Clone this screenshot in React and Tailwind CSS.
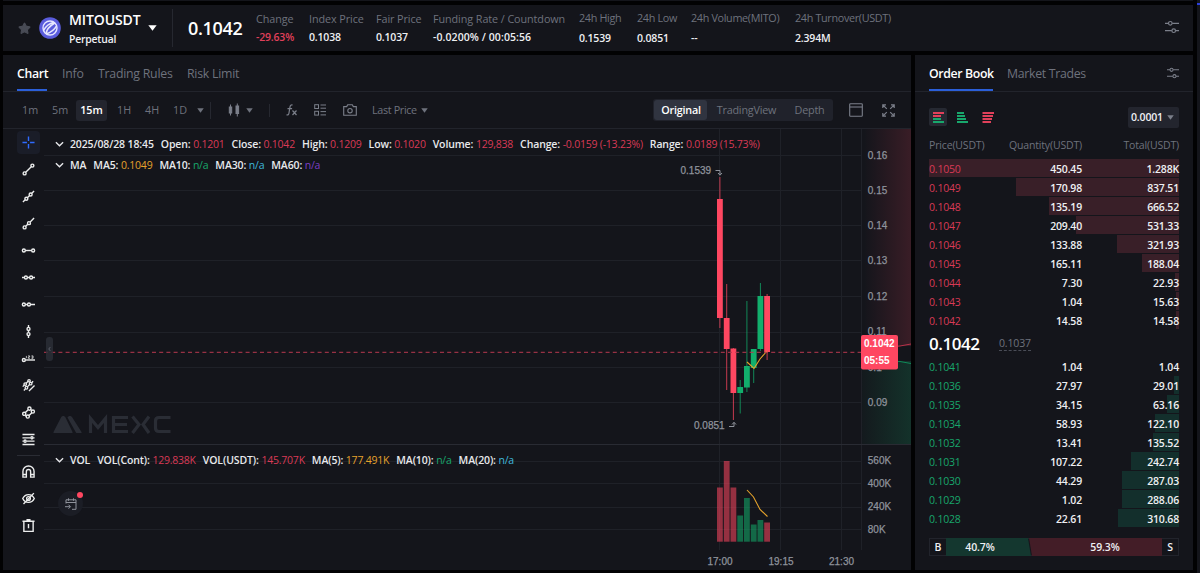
import { Star } from 'lucide-react';

const stats = [
  { label: 'Change', value: '-29.63%', width: 'w-[53px]', red: true },
  { label: 'Index Price', value: '0.1038', width: 'w-[67px]' },
  { label: 'Fair Price', value: '0.1037', width: 'w-[57px]' },
  { label: 'Funding Rate / Countdown', value: '-0.0200% / 00:05:56', width: 'w-[146px]', wide: true },
  { label: '24h High', value: '0.1539', width: 'w-[58px]', spread: true },
  { label: '24h Low', value: '0.0851', width: 'w-[54px]', spread: true },
  { label: '24h Volume(MITO)', value: '--', width: 'w-[104px]', spread: true },
  { label: '24h Turnover(USDT)', value: '2.394M', width: 'w-[110px]', spread: true },
];

const asks = [
  ['0.1050', '450.45', '1.288K', 250],
  ['0.1049', '170.98', '837.51', 163],
  ['0.1048', '135.19', '666.52', 130],
  ['0.1047', '209.40', '531.33', 103],
  ['0.1046', '133.88', '321.93', 62],
  ['0.1045', '165.11', '188.04', 37],
  ['0.1044', '7.30', '22.93', 4],
  ['0.1043', '1.04', '15.63', 3],
  ['0.1042', '14.58', '14.58', 3],
];

const bids = [
  ['0.1041', '1.04', '1.04', 0],
  ['0.1036', '27.97', '29.01', 5],
  ['0.1035', '34.15', '63.16', 12],
  ['0.1034', '58.93', '122.10', 24],
  ['0.1032', '13.41', '135.52', 26],
  ['0.1031', '107.22', '242.74', 48],
  ['0.1030', '44.29', '287.03', 57],
  ['0.1029', '1.02', '288.06', 57],
  ['0.1028', '22.61', '310.68', 61],
];

const RED = '#ff4761';
const GREEN = '#12ae6c';

// x, open/close box, wick, volume top
const candles = [
  { x: 717, top: 199, bottom: 318, high: 177, low: 328, vol: 487.5, color: RED },
  { x: 723.8, top: 318, bottom: 349, high: 284, low: 390, vol: 461, color: RED },
  { x: 730.5, top: 348.5, bottom: 393, high: 348, low: 420, vol: 487.5, color: RED },
  { x: 737.3, top: 387, bottom: 393, high: 380, low: 413.5, vol: 515.5, color: GREEN },
  { x: 744, top: 366, bottom: 387.5, high: 301, low: 392, vol: 498, color: GREEN },
  { x: 750.8, top: 349, bottom: 368, high: 349, low: 383, vol: 524.5, color: GREEN },
  { x: 757.5, top: 296, bottom: 349, high: 283, low: 351, vol: 520, color: GREEN },
  { x: 764.2, top: 296, bottom: 352, high: 294, low: 360, vol: 522.5, color: RED },
];

const priceTicks = [
  ['0.16', 155.5],
  ['0.15', 190.5],
  ['0.14', 225.5],
  ['0.13', 260.5],
  ['0.12', 296.5],
  ['0.11', 332],
  ['0.1', 367.5],
  ['0.09', 402.5],
];

const volumeTicks = [
  ['560K', 461],
  ['400K', 483.5],
  ['240K', 507],
  ['80K', 529.5],
];

const Caret = ({ className = '' }) => (
  <svg viewBox="0 0 8 5" className={`h-[5px] w-[7px] shrink-0 ${className}`}>
    <path d="M0.3 0h7.4L4 5z" fill="currentColor" />
  </svg>
);

const Chevron = () => (
  <svg viewBox="0 0 10 6" className="mr-[6px] mb-[2px] h-[6px] w-[9px] shrink-0">
    <path d="M1 1l4 4 4-4" fill="none" stroke="#e8e9ec" strokeWidth="1.5" />
  </svg>
);

const Sliders = ({ className }) => (
  <svg viewBox="0 0 14 14" className={className} fill="none" stroke="#7b7f8a" strokeWidth="1.2">
    <path d="M0 3.3h3.5M7.2 3.3H14M0 10.7h6.8M10.5 10.7H14" />
    <circle cx="5.3" cy="3.3" r="1.8" />
    <circle cx="8.7" cy="10.7" r="1.8" />
  </svg>
);

const toolIcons = [
  <g stroke="#2f6bff"><path d="M7 0.5v4.8M7 8.7v4.800M0.500 7h4.800M8.700 7h4.800" /></g>,
  <g><path d="M4 10l6-6" /><circle cx="2.8" cy="11.2" r="1.6" /><circle cx="11.2" cy="2.8" r="1.6" /></g>,
  <g><path d="M1 13l2.4-2.4M6 8.200l2-2M10.600 3.600L13 1.200" /><circle cx="4.700" cy="9.400" r="1.600" /><circle cx="9.300" cy="4.800" r="1.600" /></g>,
  <g><path d="M4 10l2.200-2.200M8.800 5.400L13 1.200" /><circle cx="2.800" cy="11.200" r="1.600" /><circle cx="7.500" cy="6.600" r="1.600" /></g>,
  <g><path d="M3.700 7h6.600" /><circle cx="2" cy="7" r="1.600" /><circle cx="12" cy="7" r="1.600" /></g>,
  <g><path d="M0 7h2.500M5.800 7h2.400M11.500 7H14" /><circle cx="4.200" cy="7" r="1.600" /><circle cx="9.800" cy="7" r="1.600" /></g>,
  <g><path d="M3.600 7h2.200M9.200 7H14" /><circle cx="2" cy="7" r="1.600" /><circle cx="7.500" cy="7" r="1.600" /></g>,
  <g><path d="M7 0v2.500M7 5.800v2.400M7 11.500V14" /><circle cx="7" cy="4.200" r="1.600" /><circle cx="7" cy="9.800" r="1.600" /></g>,
  <g><path d="M3.800 8.600H14" /><circle cx="2" cy="8.600" r="1.600" /><path d="M4.700 4.200v2.500M6.500 4.200h1.700v1.200H6.800v1.400h1.700M10.200 4.200h1.700v2.600h-1.700M10.400 5.500h1.400" strokeWidth="0.800" /></g>,
  <g strokeWidth="1.400"><path d="M0.800 8.200l1.700-1.700M4.500 4.500l2.200-2.200M2 12.400l1.600-1.600M6 8.200l2-2M10.400 4l1.600-1.600M7.500 13l6-6" /><circle cx="3.500" cy="5.500" r="1.400" /><circle cx="7.600" cy="1.900" r="1.300" /><circle cx="4.800" cy="9.400" r="1.400" /><circle cx="9.300" cy="5" r="1.400" /></g>,
  <g strokeWidth="1.500"><path d="M3.400 7.200L6.600 4M7.600 10.200L10.600 7.200M9.600 4l1.200 1.200M3.400 9.800l1.400 1.400" /><circle cx="2.400" cy="8.400" r="1.700" /><circle cx="8" cy="2.800" r="1.700" /><circle cx="6.200" cy="11.400" r="1.700" /><circle cx="11.700" cy="6" r="1.700" /></g>,
  <g><path d="M0.500 1.600h13M0.500 5.200h8.500M12.300 5.200h1.200M0.500 8.800h1.200M5 8.800h8.500M0.500 12.400h13" /><circle cx="10.700" cy="5.200" r="1.200" /><circle cx="3.300" cy="8.800" r="1.200" /></g>,
];

const bottomTools = [
  <g><path d="M1 13V7a6 6 0 0112 0v6H9.300V7.200a2.300 2.300 0 00-4.600 0V13zM1 10.200h3.700M9.300 10.200H13" /></g>,
  <g><path d="M0.800 7C3.500 1.400 10.500 1.400 13.200 7 10.500 12.600 3.500 12.600 0.800 7z" /><circle cx="7" cy="7" r="2" /><path d="M1.600 13L12.800 1.200" /></g>,
  <g><path d="M0.500 2.400h13M2 2.400v10.900h10V2.400M4.800 0.800h4.400M7 5.400v4.600" /></g>,
];

const ToolIcon = ({ children, active }) => (
  <div
    className={`flex h-[23px] w-[23px] shrink-0 items-center justify-center rounded-sm ${active ? 'bg-[#1a1d28]' : ''}`}
  >
    <svg viewBox="0 0 14 14" className="h-[13px] w-[13px] overflow-visible" fill="none" stroke="#eceded" strokeWidth="1.500">
      {children}
    </svg>
  </div>
);

const Header = () => (
  <header className="flex h-[46px] items-center bg-[#14151b] pl-[15px]">
    <Star className="h-[13px] w-[13px] fill-[#484b55] text-[#484b55]" />
    <svg viewBox="0 0 22 22" className="ml-[8px] h-[22px] w-[22px]">
      <circle cx="11" cy="11" r="10.8" fill="#5a5cdc" />
      <circle cx="11" cy="11" r="7" fill="none" stroke="#e6e7ff" strokeWidth="1.4" />
      <path d="M4.600 13.400C6.500 9.500 10 6.500 15 5.200M7 17C7.500 12 11.500 8.500 15.800 6M7 17C11.500 15.500 15.500 12.500 17.600 8.800" fill="none" stroke="#e6e7ff" strokeWidth="1.500" />
    </svg>
    <div className="ml-[8px] w-[79px] pt-[3px] whitespace-nowrap">
      <div className="text-[14px] leading-[18px] font-semibold tracking-[-0.1px] text-white">MITOUSDT</div>
      <div className="mt-[2px] text-[10.4px] leading-[17px] font-semibold tracking-[-0.2px] text-[#eeeff2]">Perpetual</div>
    </div>
    <Caret className="h-[6px] w-[9px] text-white" />
    <div className="ml-[15px] h-[38px] w-px bg-[#262830]" />
    <div className="ml-[15px] w-[68px] pt-px text-[18px] font-semibold tracking-[-0.3px] text-white">0.1042</div>
    {stats.map((s) => (
      <div key={s.label} className={`${s.width} shrink-0 whitespace-nowrap text-[10.8px]`}>
        <div className={`leading-[15px] text-[#6e727d] ${s.spread ? '-mt-px tracking-[-0.33px]' : 'tracking-[-0.08px]'}`}>
          {s.label}
        </div>
        <div
          className={`text-[10.5px] leading-[15px] font-[550] ${s.wide ? 'tracking-[0.08px]' : 'tracking-[-0.18px]'} ${s.spread ? 'mt-[6px]' : 'mt-[4px]'} ${s.red ? 'text-[#e0405a]' : 'text-[#eeeff2]'}`}
        >
          {s.value}
        </div>
      </div>
    ))}
    <Sliders className="mr-[14px] mb-[2px] ml-auto h-[14px] w-[14px]" />
  </header>
);

const Toolbar = () => (
  <div className="flex h-[37px] items-center border-b border-[#22242c] pl-[13px] text-[10.8px] whitespace-nowrap text-[#6e727d]">
    <span className="w-[30px] pl-[6px]">1m</span>
    <span className="w-[30px] pl-[6px]">5m</span>
    <span className="flex h-[21px] w-[31px] items-center justify-center rounded-[3px] bg-[#23252e] font-semibold text-white">15m</span>
    <span className="w-[28px] pl-[10px]">1H</span>
    <span className="w-[28px] pl-[10px]">4H</span>
    <span className="w-[34px] pl-[10px]">1D</span>
    <Caret />
    <div className="ml-[6px] h-[17px] w-px bg-[#262830]" />
    <svg viewBox="0 0 12 14" className="ml-[17px] h-[14px] w-[12px]" fill="#7b7f8a" stroke="#7b7f8a">
      <path d="M2.500 1.500v11M9.300 0.500v13" />
      <rect x="1.300" y="4" width="2.400" height="6" />
      <rect x="8" y="3" width="2.600" height="7.500" />
    </svg>
    <Caret className="ml-[6px]" />
    <div className="ml-[16px] h-[13px] w-px bg-[#262830]" />
    <svg viewBox="0 0 12 12" className="ml-[16px] h-[12px] w-[12px]" fill="none" stroke="#7b7f8a" strokeWidth="1.2">
      <path d="M0.500 10.800c1.800.6 2.200-.4 2.500-2L4 2.800C4.300 1.200 5 .6 6.600 1M1.500 4.600h4.600M6.500 6.500l4 4.500M10.500 6.500l-4 4.500" />
    </svg>
    <svg viewBox="0 0 12 12" className="ml-[16px] h-[12px] w-[12px]" fill="none" stroke="#7b7f8a" strokeWidth="1">
      <rect x="0.700" y="0.700" width="3.800" height="3.800" />
      <rect x="0.700" y="7.300" width="3.800" height="3.800" />
      <path d="M6.500 1h5.500M6.500 4.200h5.500M6.500 7.600h5.500M6.500 10.900h5.500" />
    </svg>
    <svg viewBox="0 0 14 12" className="ml-[17px] h-[12px] w-[14px]" fill="none" stroke="#7b7f8a" strokeWidth="1.1">
      <path d="M0.700 2.600h3l1-1.800h4.600l1 1.800h3v8.700H0.700z" />
      <circle cx="7" cy="6.700" r="2.200" />
    </svg>
    <span className="ml-[15px] w-[49px] tracking-[-0.35px]">Last Price</span>
    <Caret />
    <div className="ml-auto flex h-[22px] items-center rounded-[3px] bg-[#20222b] tracking-[-0.2px]">
      <span className="ml-px flex h-[20px] w-[53px] items-center justify-center rounded-[3px] bg-[#303440] pl-px font-[550] text-white">Original</span>
      <span className="w-[79px] text-center">TradingView</span>
      <span className="w-[47px] text-center">Depth</span>
    </div>
    <svg viewBox="0 0 14 14" className="ml-[16px] h-[14px] w-[14px]" fill="none" stroke="#7b7f8a" strokeWidth="1.1">
      <rect x="0.700" y="0.700" width="12.600" height="12.600" rx="0.800" />
      <path d="M0.700 4h12.600" />
    </svg>
    <svg viewBox="0 0 13 13" className="mr-[16px] ml-[19px] h-[13px] w-[13px]" fill="none" stroke="#7b7f8a" strokeWidth="1.200">
      <path d="M0.800 4V0.800H4M9 0.800h3.200V4M12.200 9v3.200H9M4 12.200H0.800V9M0.800 0.800l4 4M12.200 0.800l-4 4M12.200 12.200l-4-4M0.800 12.200l4-4" />
    </svg>
  </div>
);

const Pair = ({ name, value, color = 'text-[#d93a56]' }) => (
  <span className="mr-[7px]">
    {name}: <span className={`font-normal tracking-[-0.22px] ${color}`}>{value}</span>
  </span>
);

const legend = 'absolute left-[11px] flex h-[16px] items-center text-[10.5px] font-[550] tracking-[-0.13px] whitespace-nowrap text-[#e8e9ec]';

const PriceChart = () => (
  <svg viewBox="44 129 867 441" className="h-[441px] w-[867px]" fontFamily="Liberation Sans, Arial, sans-serif" fontSize="10">
    <defs>
      <linearGradient id="askDepth">
        <stop offset="0" stopColor="#ff4761" stopOpacity="0" />
        <stop offset="1" stopColor="#ff4761" stopOpacity="0.16" />
      </linearGradient>
      <linearGradient id="bidDepth">
        <stop offset="0" stopColor="#12ae6c" stopOpacity="0.03" />
        <stop offset="1" stopColor="#12ae6c" stopOpacity="0.19" />
      </linearGradient>
    </defs>

    <g stroke="#1f2128">
      {[...priceTicks, ...volumeTicks].map(([label, y]) => (
        <path key={label} d={`M44 ${Math.floor(y) + 0.5}H861`} />
      ))}
      <path d="M719.500 129V550M780.500 129V550M841.500 129V550M861.500 129V550" />
    </g>
    <path d="M44 444.500H911" stroke="#292b33" />

    <rect x="864" y="129" width="47" height="217" fill="url(#askDepth)" />
    <rect x="862" y="361" width="49" height="83" fill="url(#bidDepth)" />
    <path d="M890 346.800L900 346 911 344" fill="none" stroke="#b8324a" />
    <path d="M890 361L900 361.500 911 363.500" fill="none" stroke="#0f8a58" />

    <g fill="#2a2d35">
      <path d="M53.500 432l7.500-14.500c1-2 3.500-2 4.500 0l7 14.500c.4.800 0 1-1 1H54.500c-1 0-1.300-.3-1-1z" />
      <path d="M67.500 417.500c1-2 3.800-2 4.800 0l9.200 14.500c.4.700.1 1-.8 1h-4.500z" />
    </g>
    <g fill="none" stroke="#2a2d35" strokeWidth="3.200">
      <path d="M90.500 433v-14.500l7.500 9 7.500-9V433" />
      <path d="M128 417.500h-14.500v14H128M113.500 424.500H127" />
      <path d="M132.500 416.500l6.500 8-6.500 8.500M149 416.500l-6 8 6 8.500" />
      <path d="M170.500 417.500H159c-2.500 0-3.500 1-3.500 3.500v7c0 2.500 1 3.500 3.500 3.500h11.500" />
    </g>

    {candles.map((c) => (
      <g key={c.x} fill={c.color}>
        <rect x={c.x} y={c.vol} width="5.800" height={541.7 - c.vol} opacity="0.550" />
        <rect x={c.x + 2.4} y={c.high} width="1" height={c.low - c.high} opacity="0.750" />
        <rect x={c.x} y={c.top} width="5.800" height={c.bottom - c.top} />
      </g>
    ))}
    <path d="M747 362l7 6.500 6-9.500 7-8" fill="none" stroke="#e5a32c" strokeWidth="1.100" />
    <path d="M747 490l6.500 7 6.500 12.500 7.500 7" fill="none" stroke="#e5a32c" strokeWidth="1.100" />
    <path d="M44 352.300H861" stroke="#b8394f" strokeDasharray="4 3.200" />

    <g fill="#8f939c" stroke="#8f939c" strokeWidth="0.250">
      {[...priceTicks, ...volumeTicks].map(([label, y]) => (
        <text key={label} x="867.800" y={y + 3.3}>{label}</text>
      ))}
      <text x="680.500" y="174">0.1539</text>
      <text x="694" y="429">0.0851</text>
      <text x="720" y="565.300" textAnchor="middle">17:00</text>
      <text x="781" y="565.300" textAnchor="middle">19:15</text>
      <text x="841.500" y="565.300" textAnchor="middle">21:30</text>
    </g>
    <g fill="none" stroke="#8f939c">
      <path d="M715.500 170.500h4.500v4M718 173l2 2.200 2-2.200" />
      <path d="M729 426.500h5v-4M732 424.500l2-2.200 2 2.200" />
    </g>

    <rect x="861" y="335" width="37" height="34.500" rx="2" fill="#ff4761" />
    <g fill="#fff" fontWeight="700">
      <text x="864" y="347">0.1042</text>
      <text x="864" y="364">05:55</text>
    </g>
  </svg>
);

const ChartPanel = () => (
  <section className="flex h-[515px] w-[908px] flex-col bg-[#14151b]">
    <nav className="flex h-[37px] gap-[15px] border-b border-[#22242c] pl-[14px] text-[12.3px] tracking-[-0.24px] whitespace-nowrap text-[#6e727d]">
      <span className="flex h-[36px] w-[30px] items-center border-b-2 border-[#2b5fd9] pt-[4px] font-[550] tracking-[-0.3px] text-white">Chart</span>
      <span className="flex h-[36px] w-[21px] items-center pt-[2px]">Info</span>
      <span className="flex h-[36px] w-[74px] items-center pt-[2px]">Trading Rules</span>
      <span className="flex h-[36px] items-center pt-[2px]">Risk Limit</span>
    </nav>
    <Toolbar />
    <div className="flex h-[441px]">
      <aside className="flex w-[41px] flex-col items-center gap-[4px] pt-[2px] pr-[4px] pl-[14px]">
        {toolIcons.map((icon, i) => (
          <ToolIcon key={i} active={i === 0}>{icon}</ToolIcon>
        ))}
        <div className="h-px w-[23px] shrink-0 bg-[#2a2c34]" />
        {bottomTools.map((icon, i) => (
          <ToolIcon key={i}>{icon}</ToolIcon>
        ))}
      </aside>
      <div className="relative">
        <PriceChart />
        <div className={`${legend} top-[8px]`}>
          <Chevron />
          <span className="mr-[7px]">2025/08/28 18:45</span>
          <Pair name="Open" value="0.1201" />
          <Pair name="Close" value="0.1042" />
          <Pair name="High" value="0.1209" />
          <Pair name="Low" value="0.1020" />
          <Pair name="Volume" value="129,838" />
          <Pair name="Change" value="-0.0159 (-13.23%)" />
          <Pair name="Range" value="0.0189 (15.73%)" />
        </div>
        <div className={`${legend} top-[29px]`}>
          <Chevron />
          <span className="mr-[7px]">MA</span>
          <Pair name="MA5" value="0.1049" color="text-[#e5a32c]" />
          <Pair name="MA10" value="n/a" color="text-[#18a76c]" />
          <Pair name="MA30" value="n/a" color="text-[#3fb8dc]" />
          <Pair name="MA60" value="n/a" color="text-[#7a3fc4]" />
        </div>
        <div className={`${legend} top-[324px]`}>
          <Chevron />
          <span className="mr-[7px]">VOL</span>
          <Pair name="VOL(Cont)" value="129.838K" />
          <Pair name="VOL(USDT)" value="145.707K" />
          <Pair name="MA(5)" value="177.491K" color="text-[#e5a32c]" />
          <Pair name="MA(10)" value="n/a" color="text-[#18a76c]" />
          <Pair name="MA(20)" value="n/a" color="text-[#3fb8dc]" />
        </div>
        <div className="absolute top-[208px] left-[2px] flex h-[24px] w-[7px] items-center justify-center rounded-[3px] bg-[#2c2f38]/80">
          <svg viewBox="0 0 4 6" className="h-[6px] w-[3px]">
            <path d="M3 0.500L1 3l2 2.500" fill="none" stroke="#6e727d" />
          </svg>
        </div>
        <div className="absolute top-[362px] left-[14px] flex h-[25px] w-[25px] items-center justify-center rounded-full bg-[#1b1d25]">
          <svg viewBox="0 0 12 12" className="h-[12px] w-[12px]" fill="none" stroke="#8f939c">
            <path d="M1 5.500V1.800h10v9.500H7M1 4.500h10M3.500 0.300v2.500M8.500 0.300v2.500M0 8.700h5M3.500 6.700l2 2-2 2" />
          </svg>
          <span className="absolute top-[1px] right-0 h-[6px] w-[6px] rounded-full bg-[#ff4761]" />
        </div>
      </div>
    </div>
  </section>
);

const Row = ({ row, ask }) => (
  <div className="relative flex h-[19px] items-center pt-[2px] text-[10.5px] font-[550] tracking-[-0.18px] text-[#eeeff2]">
    <div
      className={`absolute top-0 right-0 h-[18px] ${ask ? 'bg-[#391f28]' : 'bg-[#132f2c]'}`}
      style={{ width: row[3] }}
    />
    <span className={`relative w-[80px] font-normal ${ask ? 'text-[#d93a56]' : 'text-[#18a76c]'}`}>{row[0]}</span>
    <span className="relative w-[73px] text-right">{row[1]}</span>
    <span className="relative w-[97px] text-right">{row[2]}</span>
  </div>
);

const BookIcon = ({ top, bottom, alignRight }) => (
  <svg viewBox="0 0 12 11" className="h-[11px] w-[12px]">
    <path d={alignRight ? 'M0.500 1H12M0.500 4H11' : top === bottom ? 'M1 1h7M1 4h8' : 'M1 1h11M1 4h8'} stroke={top} strokeWidth="1.800" />
    <path d={alignRight ? 'M0.500 7H10M0.500 10H9' : top === bottom ? 'M1 7h9M1 10h11' : 'M1 7h8M1 10h11'} stroke={bottom} strokeWidth="1.800" />
  </svg>
);

const OrderBook = () => (
  <section className="h-[515px] w-[278px] bg-[#14151b]">
    <nav className="flex h-[37px] items-center gap-[14px] border-b border-[#22242c] pr-[14px] pl-[14px] text-[12.3px] tracking-[-0.3px] whitespace-nowrap text-[#6e727d]">
      <span className="flex h-[36px] w-[64px] items-center border-b-2 border-[#2b5fd9] pt-[4px] font-[550] tracking-[-0.36px] text-white">Order Book</span>
      <span className="pt-[2px]">Market Trades</span>
      <Sliders className="ml-auto h-[12px] w-[12px]" />
    </nav>
    <div className="px-[14px]">
      <div className="flex h-[50px] items-center">
        <span className="mr-[9px] flex h-[18px] w-[18px] items-center justify-center rounded-[2px] bg-[#262932]">
          <BookIcon top="#e0405a" bottom="#18a76c" />
        </span>
        <BookIcon top="#18a76c" bottom="#18a76c" />
        <span className="ml-[14px] flex"><BookIcon top="#e0405a" bottom="#e0405a" alignRight /></span>
        <span className="ml-auto flex h-[21px] w-[51px] items-center justify-between rounded-[2px] bg-[#23252e] pr-[5px] pl-[3px] text-[10.5px] font-[550] tracking-[-0.16px] text-[#eeeff2]">
          <span className="pt-[2px]">0.0001</span>
          <Caret className="text-[#7b7f8a]" />
        </span>
      </div>
      <div className="flex h-[17px] items-start text-[10.5px] leading-[7px] tracking-[-0.16px] whitespace-nowrap text-[#6e727d]">
        <span className="w-[60px]">Price(USDT)</span>
        <span className="w-[93px] text-right">Quantity(USDT)</span>
        <span className="w-[97px] text-right">Total(USDT)</span>
      </div>
      {asks.map((row) => (
        <Row key={row[0]} row={row} ask />
      ))}
      <div className="flex h-[27px] items-center">
        <span className="w-[70px] text-[17px] font-semibold tracking-[-0.45px] text-white">0.1042</span>
        <span className="border-b border-dashed border-[#4a4d57] text-[10.5px] leading-[13px] tracking-[-0.16px] text-[#6e727d]">0.1037</span>
      </div>
      {bids.map((row) => (
        <Row key={row[0]} row={row} />
      ))}
      <div className="mt-[10px] flex h-[18px] items-center border border-[#22242c] text-[10.5px] font-[550] tracking-[-0.1px] text-[#eeeff2]">
        <span className="w-[16px] pt-px text-center">B</span>
        <span className="-mr-[3px] flex h-[18px] w-[85px] items-center justify-center bg-[#14372f] pt-px pr-[17px] [clip-path:polygon(0_0,82px_0,85px_100%,0_100%)]">40.7%</span>
        <span className="flex h-[18px] w-[134px] items-center justify-center bg-[#431d27] pt-px pl-[20px] [clip-path:polygon(1px_0,100%_0,100%_100%,4px_100%)]">59.3%</span>
        <span className="w-[16px] pt-px text-center">S</span>
      </div>
    </div>
  </section>
);

export default function App() {
  return (
    <div className="flex h-[573px] w-[1200px] justify-between overflow-hidden bg-[#020203] pl-[3px] font-['Open_Sans','Noto_Sans',sans-serif]">
      <div className="flex w-[1190px] flex-col gap-[4px] border-t border-[#14151b] pt-[4px]">
        <Header />
        <main className="flex gap-[4px]">
          <ChartPanel />
          <OrderBook />
        </main>
      </div>
      <div className="h-[573px] w-[3px] border-t border-[#14151b] bg-[#14151b] pt-[2px]">
        <div className="h-[2px] bg-[#2b3fd9]" />
      </div>
    </div>
  );
}
